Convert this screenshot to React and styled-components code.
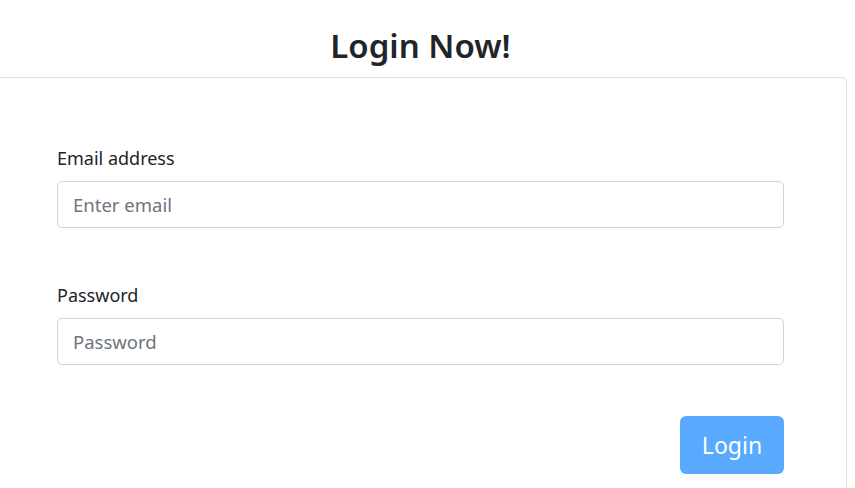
import React from "react";
import styled, { createGlobalStyle } from "styled-components";

const Global = createGlobalStyle`
  html, body { margin: 0; padding: 0; background: #fff; }
  body { font-family: "Noto Sans", "Open Sans", sans-serif; color: #212529; overflow: hidden; }
  * { box-sizing: border-box; }
`;

const Page = styled.div`
  padding-top: 23px;
`;

const Title = styled.h2`
  margin: 0 0 8px;
  text-align: center;
  font-size: 33px;
  font-weight: 600;
  line-height: 46px;
  color: #212529;
  padding-right: 14px;
`;

const Card = styled.div`
  width: 853px;
  margin-left: -6px;
  border: 1px solid rgba(0, 0, 0, 0.125);
  border-radius: 5px;
  padding: 66px 62px 40px;
`;

const Group = styled.div`
  display: flex;
  flex-direction: column;
  margin-bottom: ${(p) => p.$mb || 0}px;
`;

const Label = styled.label`
  font-size: 18px;
  line-height: 28px;
  margin-bottom: 9px;
`;

const Input = styled.input`
  height: 47px;
  width: 100%;
  border: 1px solid #ced4da;
  border-radius: 5px;
  padding: 0 15px;
  font-family: inherit;
  font-size: 18.5px;
  color: #495057;
  &::placeholder { color: #6c757d; }
`;

const Actions = styled.div`
  display: flex;
  justify-content: flex-end;
`;

const Button = styled.button`
  width: 104px;
  height: 58px;
  border: none;
  border-radius: 6px;
  background: #59a9ff;
  color: #fff;
  font-family: inherit;
  font-size: 23px;
  line-height: 1;
  cursor: default;
`;

export default function App() {
  return (
    <Page>
      <Global />
      <Title>Login Now!</Title>
      <Card>
        <Group $mb={53}>
          <Label>Email address</Label>
          <Input type="email" placeholder="Enter email" />
        </Group>
        <Group $mb={51}>
          <Label>Password</Label>
          <Input type="password" placeholder="Password" />
        </Group>
        <Actions>
          <Button disabled>Login</Button>
        </Actions>
      </Card>
    </Page>
  );
}
